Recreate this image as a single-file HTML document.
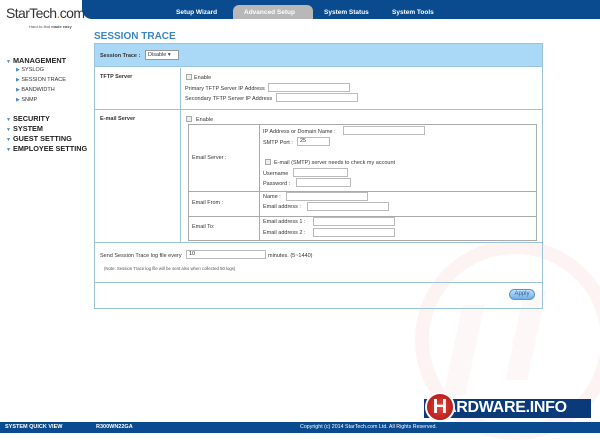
<!DOCTYPE html><html><head><style>
*{margin:0;padding:0;box-sizing:border-box}
body{width:600px;height:433px;position:relative;overflow:hidden;background:#fff;font-family:"Liberation Sans",sans-serif;font-size:5.5px;color:#333}
.a{position:absolute;white-space:nowrap}
.in{position:absolute;height:9px;border:1px solid #bbb;background:#fff;font-size:5.5px;padding-left:2px;line-height:7px}
.cb{position:absolute;width:6px;height:6px;border:1px solid #aaa;background:#eee}
.b{font-weight:bold}
.nav{font-weight:bold;font-size:7.3px;color:#222}
.sub{font-size:5.5px;color:#333}
.tri{color:#4a8ac0;font-size:5px}
</style></head><body>
<!-- watermark -->
<div class="a" style="left:415px;top:240px;width:200px;height:200px;border-radius:50%;border:14px solid #fdf3f3;"></div>
<div class="a" style="left:453px;top:305px;width:22px;height:90px;background:#fef7f7;transform:skewX(-12deg)"></div>
<div class="a" style="left:515px;top:290px;width:22px;height:90px;background:#fef7f7;transform:skewX(-12deg)"></div>
<!-- top bar -->
<div class="a" style="left:82px;top:0;width:518px;height:19px;background:#0a4a8e;border-bottom-left-radius:10px"></div>
<div class="a" style="left:233px;top:5px;width:80px;height:14px;background:#b8b8b8;border-radius:6px 6px 0 0"></div>
<div class="a b" style="left:176px;top:9px;color:#fff;font-size:6.5px">Setup Wizard</div>
<div class="a b" style="left:244px;top:9px;color:#fff;font-size:6.5px">Advanced Setup</div>
<div class="a b" style="left:324px;top:9px;color:#fff;font-size:6.5px">System Status</div>
<div class="a b" style="left:392px;top:9px;color:#fff;font-size:6.5px">System Tools</div>
<!-- logo -->
<div class="a" style="left:6px;top:5px;font-size:14px;color:#333;letter-spacing:-0.6px">StarTech<span style="color:#f29200">.</span>com</div>
<div class="a" style="left:29px;top:24px;font-size:4px;color:#555">Hard-to-find <b>made easy</b></div>
<!-- left nav -->
<div class="a nav" style="left:6px;top:56px"><span class="tri">▼</span> MANAGEMENT</div>
<div class="a sub" style="left:16px;top:67px"><span class="tri">▶</span> SYSLOG</div>
<div class="a sub" style="left:16px;top:77px"><span class="tri">▶</span> SESSION TRACE</div>
<div class="a sub" style="left:16px;top:87px"><span class="tri">▶</span> BANDWIDTH</div>
<div class="a sub" style="left:16px;top:97px"><span class="tri">▶</span> SNMP</div>
<div class="a nav" style="left:6px;top:114px"><span class="tri">▼</span> SECURITY</div>
<div class="a nav" style="left:6px;top:124px"><span class="tri">▼</span> SYSTEM</div>
<div class="a nav" style="left:6px;top:134px"><span class="tri">▼</span> GUEST SETTING</div>
<div class="a nav" style="left:6px;top:144px"><span class="tri">▼</span> EMPLOYEE SETTING</div>
<!-- title -->
<div class="a b" style="left:94px;top:31px;font-size:10px;color:#3b86c2">SESSION TRACE</div>
<!-- main box -->
<div class="a" style="left:94px;top:43px;width:449px;height:266px;border:1px solid #9cc3dc"></div>
<div class="a" style="left:95px;top:44px;width:447px;height:23px;background:#a9d9f6;border-bottom:1px solid #9cc3dc"></div>
<div class="a b" style="left:100px;top:53px">Session Trace :</div>
<div class="a" style="left:145px;top:50px;width:34px;height:10px;border:1px solid #999;background:#fff;font-size:5.5px;padding:1px 2px">Disable ▾</div>
<div class="a" style="left:95px;top:109px;width:447px;border-top:1px solid #9cc3dc"></div>
<div class="a" style="left:95px;top:242px;width:447px;border-top:1px solid #9cc3dc"></div>
<div class="a" style="left:95px;top:282px;width:447px;border-top:1px solid #9cc3dc"></div>
<div class="a" style="left:180px;top:68px;height:174px;border-left:1px solid #9cc3dc"></div>
<!-- TFTP -->
<div class="a b" style="left:100px;top:74px">TFTP Server</div>
<div class="cb" style="left:186px;top:74px"></div><div class="a" style="left:194px;top:75px">Enable</div>
<div class="a" style="left:185px;top:86px">Primary TFTP Server IP Address</div><div class="in" style="left:268px;top:83px;width:82px"></div>
<div class="a" style="left:185px;top:96px">Secondary TFTP Server IP Address</div><div class="in" style="left:276px;top:93px;width:82px"></div>
<!-- Email -->
<div class="a b" style="left:100px;top:116px">E-mail Server</div>
<div class="cb" style="left:186px;top:116px"></div><div class="a" style="left:196px;top:117px">Enable</div>
<div class="a" style="left:188px;top:124px;width:349px;height:117px;border:1px solid #aaa"></div>
<div class="a" style="left:259px;top:125px;height:115px;border-left:1px solid #aaa"></div>
<div class="a" style="left:189px;top:191px;width:347px;border-top:1px solid #aaa"></div>
<div class="a" style="left:189px;top:216px;width:347px;border-top:1px solid #aaa"></div>
<div class="a" style="left:192px;top:155px">Email Server :</div>
<div class="a" style="left:263px;top:129px">IP Address or Domain Name :</div><div class="in" style="left:343px;top:126px;width:82px"></div>
<div class="a" style="left:263px;top:140px">SMTP Port :</div><div class="in" style="left:297px;top:137px;width:33px">25</div>
<div class="cb" style="left:265px;top:159px"></div><div class="a" style="left:274px;top:160px">E-mail (SMTP) server needs to check my account</div>
<div class="a" style="left:263px;top:171px">Username</div><div class="in" style="left:293px;top:168px;width:55px"></div>
<div class="a" style="left:263px;top:181px">Password :</div><div class="in" style="left:296px;top:178px;width:55px"></div>
<div class="a" style="left:192px;top:200px">Email From :</div>
<div class="a" style="left:263px;top:194px">Name :</div><div class="in" style="left:286px;top:192px;width:82px"></div>
<div class="a" style="left:263px;top:204px">Email address :</div><div class="in" style="left:307px;top:202px;width:82px"></div>
<div class="a" style="left:192px;top:224px">Email To:</div>
<div class="a" style="left:263px;top:219px">Email address 1 :</div><div class="in" style="left:313px;top:217px;width:82px"></div>
<div class="a" style="left:263px;top:230px">Email address 2 :</div><div class="in" style="left:313px;top:228px;width:82px"></div>
<!-- send -->
<div class="a" style="left:100px;top:253px">Send Session Trace log file every</div><div class="in" style="left:186px;top:250px;width:80px">10</div>
<div class="a" style="left:268px;top:253px">minutes. (5~1440)</div>
<div class="a" style="left:104px;top:266px;font-size:4.3px;color:#555">(Note: Session Trace log file will be sent also when collected 50 logs)</div>
<div class="a" style="left:509px;top:289px;width:26px;height:11px;border-radius:6px;background:linear-gradient(#bfe2fb,#6fb0e6);border:1px solid #5a95c8;color:#2a5f95;font-size:6px;text-align:center;line-height:9px">Apply</div>
<!-- logo watermark -->
<div class="a" style="left:424px;top:399px;width:167px;height:19px;background:#0a3a7a"></div>
<div class="a b" style="left:445px;top:399px;font-size:16px;color:#fff;letter-spacing:-0.3px">ARDWARE.INFO</div>
<div class="a" style="left:425px;top:392px;width:30px;height:30px;border-radius:50%;background:radial-gradient(#e8443a,#a51010);border:2px solid #fff;color:#fff;font-weight:bold;font-size:20px;text-align:center;line-height:26px">H</div>
<!-- footer -->
<div class="a" style="left:0;top:422px;width:600px;height:11px;background:#0a4a8e"></div>
<div class="a b" style="left:5px;top:424px;color:#fff;font-size:5.5px">SYSTEM QUICK VIEW</div>
<div class="a b" style="left:96px;top:424px;color:#fff;font-size:5.5px">R300WN22GA</div>
<div class="a" style="left:300px;top:424px;color:#fff;font-size:5.3px">Copyright (c) 2014 StarTech.com Ltd. All Rights Reserved.</div>
</body></html>
